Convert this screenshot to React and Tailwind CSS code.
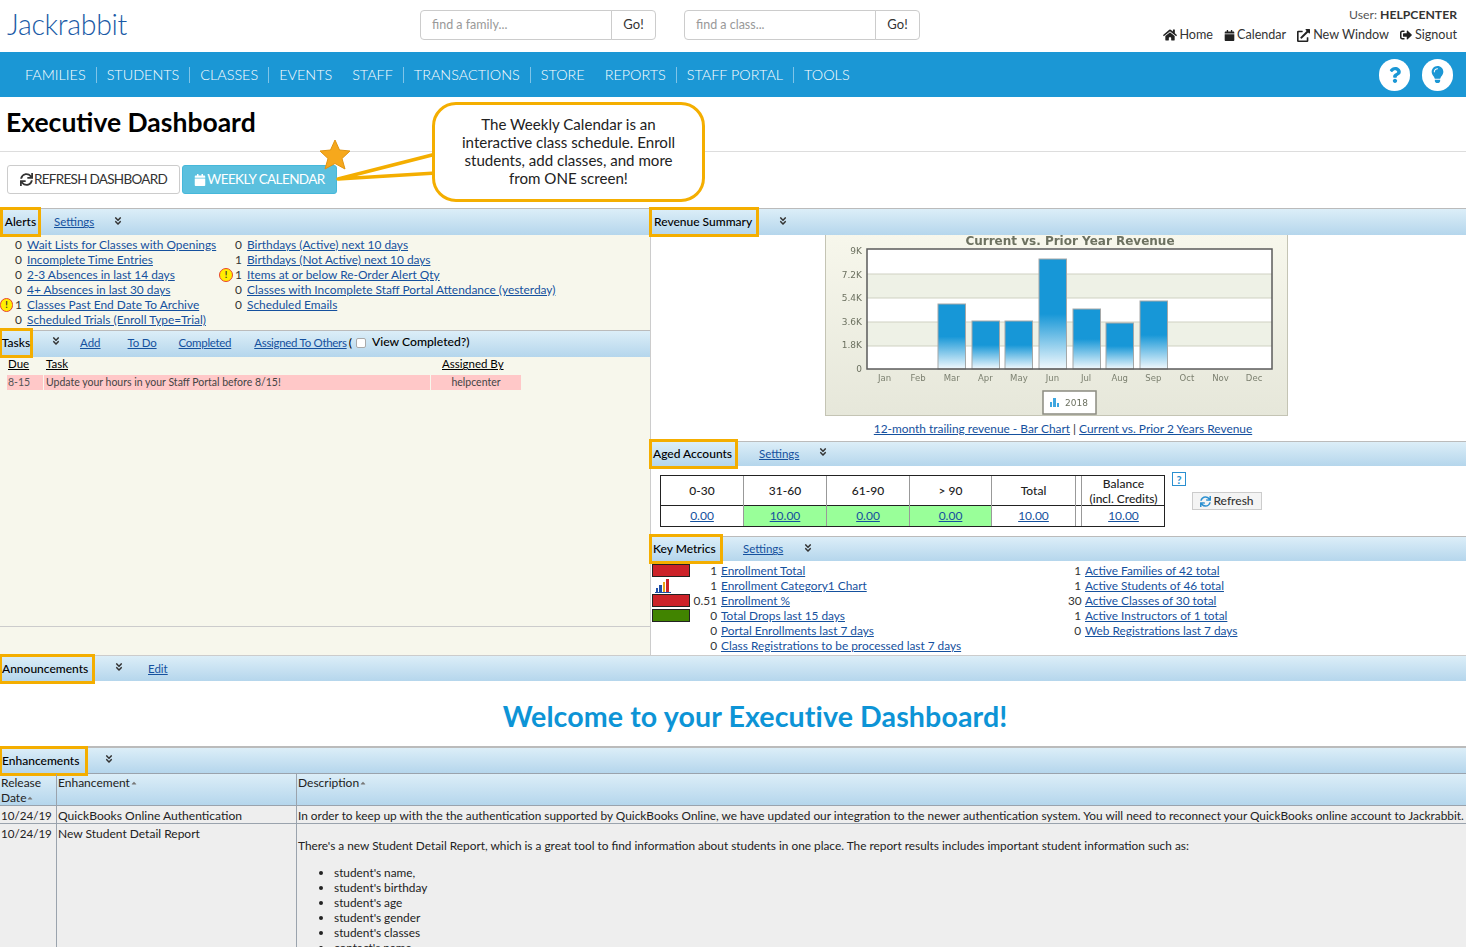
import { FaHome, FaCalendar, FaExternalLinkAlt, FaSignOutAlt, FaSync, FaQuestion, FaLightbulb, FaAngleDoubleDown, FaCaretUp } from 'react-icons/fa';

const NAV = [
  ['FAMILIES', true],
  ['STUDENTS', true],
  ['CLASSES', true],
  ['EVENTS', false],
  ['STAFF', true],
  ['TRANSACTIONS', true],
  ['STORE', false],
  ['REPORTS', true],
  ['STAFF PORTAL', true],
  ['TOOLS', false],
];

const ALERTS_LEFT = [
  ['0', 'Wait Lists for Classes with Openings'],
  ['0', 'Incomplete Time Entries'],
  ['0', '2-3 Absences in last 14 days'],
  ['0', '4+ Absences in last 30 days'],
  ['1', 'Classes Past End Date To Archive', true],
  ['0', 'Scheduled Trials (Enroll Type=Trial)'],
];

const ALERTS_RIGHT = [
  ['0', 'Birthdays (Active) next 10 days'],
  ['1', 'Birthdays (Not Active) next 10 days'],
  ['1', 'Items at or below Re-Order Alert Qty', true],
  ['0', 'Classes with Incomplete Staff Portal Attendance (yesterday)'],
  ['0', 'Scheduled Emails'],
];

const METRICS_LEFT = [
  ['red', '1', 'Enrollment Total'],
  ['chart', '1', 'Enrollment Category1 Chart'],
  ['red', '0.51', 'Enrollment %'],
  ['green', '0', 'Total Drops last 15 days'],
  [null, '0', 'Portal Enrollments last 7 days'],
  [null, '0', 'Class Registrations to be processed last 7 days'],
];

const METRICS_RIGHT = [
  ['1', 'Active Families of 42 total'],
  ['1', 'Active Students of 46 total'],
  ['30', 'Active Classes of 30 total'],
  ['1', 'Active Instructors of 1 total'],
  ['0', 'Web Registrations last 7 days'],
];

const AGED = [
  ['0-30', '0.00', false, 'w-[83px]'],
  ['31-60', '10.00', true, 'w-[83px]'],
  ['61-90', '0.00', true, 'w-[83px]'],
  ['> 90', '0.00', true, 'w-[82px]'],
  ['Total', '10.00', false, 'w-[84px]'],
];

const BARS = [
  [938, 304], [972, 321], [1005, 321], [1039, 259], [1073, 309], [1106, 323], [1140, 301],
];

const MONTHS = ['Jan', 'Feb', 'Mar', 'Apr', 'May', 'Jun', 'Jul', 'Aug', 'Sep', 'Oct', 'Nov', 'Dec'];
const STUDENT_ITEMS = ["student's name,", "student's birthday", "student's age", "student's gender", "student's classes", "contact's name"];

function Tag({ children, className = '' }) {
  return (
    <div className={`flex h-[30px] -my-0.5 shrink-0 items-center whitespace-nowrap border-[3px] border-[#f4ae00] text-[12px] font-medium text-black ${className}`}>
      {children}
    </div>
  );
}

function PanelLink({ children, className = '' }) {
  return <a className={`text-[11.5px] text-[#15519e] underline ${className}`}>{children}</a>;
}

function Chevrons({ className = '' }) {
  return <FaAngleDoubleDown className={`text-[10px] text-[#333] ${className}`} />;
}

function PanelHead({ children, className = '' }) {
  return (
    <div className={`flex items-center border-t border-t-[#bbb] bg-gradient-to-b from-[#dceef8] to-[#b5d6ec] ${className}`}>
      {children}
    </div>
  );
}

function Warn() {
  return (
    <span className="flex h-[14px] w-[14px] items-center justify-center rounded-full border-[1.5px] border-[#e8432e] bg-[#ffee00] text-[9px] font-bold leading-none text-[#333]">!</span>
  );
}

function AlertRow({ count, label, warn, numWidth }) {
  return (
    <div className="flex h-[15px] items-center text-[11.9px]">
      <span className={`flex shrink-0 items-center justify-end gap-[2px] text-[#333] ${numWidth}`}>
        {warn && <Warn />}
        {count}
      </span>
      <a className="ml-[5px] whitespace-nowrap text-[#15519e] underline">{label}</a>
    </div>
  );
}

function MetricSwatch({ kind }) {
  if (kind === 'red') return <div className="h-[13px] w-[38px] border border-[#222] bg-[#cc2229]" />;
  if (kind === 'green') return <div className="h-[13px] w-[38px] border border-[#222] bg-[#418400]" />;
  if (kind === 'chart') {
    return (
      <svg width="38" height="14" viewBox="0 0 38 14">
        <rect x="4" y="9" width="2" height="4" fill="#1f4fa8" />
        <rect x="7" y="6" width="3" height="7" fill="#1f4fa8" />
        <rect x="11" y="3" width="2" height="10" fill="#e8a317" />
        <rect x="14" y="0" width="3" height="13" fill="#cc2229" />
        <rect x="3" y="13" width="16" height="1" fill="#1f4fa8" />
      </svg>
    );
  }
  return <div className="h-[13px] w-[38px]" />;
}

function RevenueChart() {
  const ox = 825;
  const oy = 235;
  return (
    <svg width="463" height="181" viewBox="825 235 463 181" className="block" style={{ filter: 'blur(0.4px)' }}>
      <defs>
        <linearGradient id="panelBg" x1="0" y1="0" x2="0" y2="1">
          <stop offset="0" stopColor="#f7f7ec" />
          <stop offset="1" stopColor="#e6e7da" />
        </linearGradient>
        <linearGradient id="bar" x1="0" y1="0" x2="0" y2="1">
          <stop offset="0" stopColor="#1797d7" />
          <stop offset="0.5" stopColor="#1797d7" />
          <stop offset="1" stopColor="#f2f9fd" />
        </linearGradient>
      </defs>
      <rect x={ox + 0.5} y={oy - 2} width="462" height="182.5" fill="url(#panelBg)" stroke="#c4c4b4" />
      <text x="1070" y="245" textAnchor="middle" fontFamily="DejaVu Sans, sans-serif" fontSize="12" fontWeight="700" fill="#6c7160">
        Current vs. Prior Year Revenue
      </text>
      <rect x="867" y="249" width="405" height="120" fill="#fff" />
      <rect x="867" y="274" width="405" height="24" fill="#eef1e6" />
      <rect x="867" y="322" width="405" height="24" fill="#eef1e6" />
      {[274, 298, 322, 346].map((y) => (
        <line key={y} x1="867" x2="1272" y1={y} y2={y} stroke="#cfd1c2" />
      ))}
      {BARS.map(([x, top]) => (
        <rect key={x} x={x} y={top} width="27.5" height={369 - top} fill="url(#bar)" stroke="#a5a8a8" />
      ))}
      <rect x="867" y="249" width="405" height="120" fill="none" stroke="#5b5b5b" strokeWidth="1.5" />
      {[['9K', 254], ['7.2K', 278], ['5.4K', 301], ['3.6K', 325], ['1.8K', 348], ['0', 372]].map(([t, y]) => (
        <text key={t} x="862" y={y} textAnchor="end" fontFamily="DejaVu Sans, sans-serif" fontSize="9" fill="#6c7160">{t}</text>
      ))}
      {MONTHS.map((m, i) => (
        <text key={m} x={884.5 + i * 33.6} y="381" textAnchor="middle" fontFamily="DejaVu Sans, sans-serif" fontSize="8.5" fill="#7c8070">{m}</text>
      ))}
      <rect x="1043" y="391" width="53" height="23" fill="#fff" stroke="#8b8b80" strokeWidth="1.5" />
      <rect x="1050" y="402" width="2" height="5" fill="#3ea6e0" />
      <rect x="1053" y="398" width="3" height="9" fill="#3ea6e0" />
      <rect x="1057" y="403" width="2" height="4" fill="#3ea6e0" />
      <text x="1065" y="406" fontFamily="DejaVu Sans, sans-serif" fontSize="9" fill="#6c7160">2018</text>
    </svg>
  );
}

function SearchBox({ placeholder }) {
  return (
    <div className="flex h-[30px] items-stretch">
      <div className="flex w-[192px] items-center rounded-l border border-[#ccc] px-[11px] text-[12.5px] text-[#999]">{placeholder}</div>
      <div className="-ml-px flex w-[45px] items-center justify-center rounded-r border border-[#ccc] text-[13px] text-[#333]">Go!</div>
    </div>
  );
}

export default function App() {
  return (
    <div className="relative h-[947px] w-[1466px] overflow-hidden bg-white font-['Lato',sans-serif] text-[12px] text-[#222]">
      {/* Top bar */}
      <header className="flex h-[52px] items-start">
        <div className="ml-[7px] mt-[4px] w-[413px] text-[28.5px] font-light leading-[40px] tracking-[-0.3px] text-[#1a5aa6]">Jackrabbit</div>
        <div className="mt-[10px]"><SearchBox placeholder="find a family..." /></div>
        <div className="ml-[28px] mt-[10px]"><SearchBox placeholder="find a class..." /></div>
        <div className="ml-auto mr-[9px] mt-[7px] flex flex-col items-end">
          <div className="text-[12.2px] leading-[16px] text-[#555]">User: <b className="text-[#333]">HELPCENTER</b></div>
          <div className="mt-[4px] flex items-center gap-[11px] text-[12.6px] leading-[16px] text-[#333]">
            <span className="flex items-center gap-[2px]"><FaHome className="text-[14px] text-[#222]" />Home</span>
            <span className="flex items-center gap-[2px]"><FaCalendar className="text-[11px] text-[#222]" />Calendar</span>
            <span className="flex items-center gap-[3px]"><FaExternalLinkAlt className="text-[13px] text-[#222]" />New Window</span>
            <span className="flex items-center gap-[3px]"><FaSignOutAlt className="text-[12px] text-[#222]" />Signout</span>
          </div>
        </div>
      </header>

      {/* Main nav */}
      <nav className="flex h-[45px] items-center bg-[#1b97d5] pl-[15px] pr-[13px] text-white">
        {NAV.map(([label, sep]) => (
          <div key={label} className={`flex h-[16px] items-center px-[10px] pt-[1px] text-[14.4px] font-light leading-none ${sep ? 'border-r border-r-[#7fc4e8]' : ''}`}>
            {label}
          </div>
        ))}
        <div className="ml-auto flex items-center gap-[12px]">
          <span className="flex h-[32px] w-[31px] items-center justify-center rounded-full bg-white text-[#1b97d5]"><FaQuestion className="text-[16px]" /></span>
          <span className="flex h-[32px] w-[31px] items-center justify-center rounded-full bg-white text-[#1b97d5]"><FaLightbulb className="text-[17px]" /></span>
        </div>
      </nav>

      {/* Title */}
      <div className="flex h-[55px] items-center border-b border-b-[#ddd] pl-[6px]">
        <h1 className="pb-[4px] text-[26.5px] font-bold leading-none text-black">Executive Dashboard</h1>
      </div>

      {/* Toolbar */}
      <div className="flex h-[56px] items-start gap-[2px] pl-[7px] pt-[13px]">
        <button className="flex h-[29px] w-[173px] items-center justify-center gap-[1px] rounded-[3px] border border-[#ccc] bg-white text-[13.5px] tracking-[-0.7px] text-[#333]">
          <FaSync className="text-[13px]" />REFRESH DASHBOARD
        </button>
        <button className="flex h-[29px] w-[155px] items-center justify-center gap-[1px] rounded-[3px] border border-[#46b8da] bg-[#5bc0de] text-[13.5px] tracking-[-0.6px] text-white">
          <FaCalendar className="text-[12px]" />WEEKLY CALENDAR
        </button>
      </div>

      {/* Two columns */}
      <div className="flex h-[447px]">
        <div className="flex w-[650px] flex-col bg-[#f7f7ec]">
          <PanelHead className="h-[27px]">
            <Tag className="w-[41px] justify-center">Alerts</Tag>
            <PanelLink className="ml-[13px]">Settings</PanelLink>
            <Chevrons className="ml-[19px] -mt-[3px]" />
          </PanelHead>
          <div className="flex h-[95px] pt-[2px]">
            <div className="w-[217px]">
              {ALERTS_LEFT.map(([n, l, w]) => <AlertRow key={l} count={n} label={l} warn={w} numWidth="w-[22px]" />)}
            </div>
            <div>
              {ALERTS_RIGHT.map(([n, l, w]) => <AlertRow key={l} count={n} label={l} warn={w} numWidth="w-[25px]" />)}
            </div>
          </div>
          <PanelHead className="h-[27px] pb-[3px]">
            <Tag className="-ml-px w-[34px] justify-center">Tasks</Tag>
            <Chevrons className="ml-[18px] -mt-[3px]" />
            <PanelLink className="ml-[19px]">Add</PanelLink>
            <PanelLink className="ml-[27px] tracking-[-0.2px]">To Do</PanelLink>
            <PanelLink className="ml-[22px] tracking-[-0.3px]">Completed</PanelLink>
            <PanelLink className="ml-[23px] tracking-[-0.3px]">Assigned To Others</PanelLink>
            <span className="ml-[2px] font-medium text-black">(</span>
            <span className="ml-[4px] h-[10px] w-[10px] rounded-[2px] border border-[#aaa] bg-white" />
            <span className="ml-[6px] text-[12.2px] font-medium text-black">View Completed?)</span>
          </PanelHead>
          <div className="flex h-[18px] items-center pb-[4px] pl-[8px] text-[11.5px] text-black underline">
            <span className="w-[38px]">Due</span>
            <span className="w-[396px]">Task</span>
            <span>Assigned By</span>
          </div>
          <div className="ml-[7px] flex h-[15px] w-[514px] gap-[1px] pt-0 text-[10.5px] text-[#444]">
            <div className="flex w-[36px] items-center bg-[#ffc8c8] pl-[1px] pt-[1px] text-[#555]">8-15</div>
            <div className="flex w-[386px] items-center bg-[#ffc8c8] pl-[2px] pt-[1px]">Update your hours in your Staff Portal before 8/15!</div>
            <div className="flex flex-1 items-center justify-center bg-[#ffc8c8] pt-[1px]">helpcenter</div>
          </div>
          <div className="flex-1" />
          <div className="mb-[28px] border-t border-t-[#ccc]" />
        </div>

        <div className="flex flex-1 flex-col border-l border-l-[#ccc]">
          <PanelHead className="h-[27px]">
            <Tag className="-ml-[2px] w-[110px] pl-[2px]">Revenue Summary</Tag>
            <Chevrons className="ml-[19px] -mt-[3px]" />
          </PanelHead>
          <div className="flex h-[206px] flex-col items-center">
            <div className="-ml-[5px]"><RevenueChart /></div>
            <div className="ml-[9px] mt-[4px] text-[11.9px] text-[#333]">
              <a className="text-[#15519e] underline">12-month trailing revenue - Bar Chart</a> | <a className="text-[#15519e] underline">Current vs. Prior 2 Years Revenue</a>
            </div>
          </div>
          <PanelHead className="h-[25px] pb-[1px]">
            <Tag className="-ml-[2px] w-[89px] pl-[1px]">Aged Accounts</Tag>
            <PanelLink className="ml-[21px]">Settings</PanelLink>
            <Chevrons className="ml-[19px] -mt-[3px]" />
          </PanelHead>
          <div className="flex h-[70px] pl-[9px] pt-[9px]">
            <div className="flex h-[52px] border border-[#222]">
              {AGED.map(([h, v, green, w]) => (
                <div key={h} className={`flex flex-col border-r border-r-[#999] ${w}`}>
                  <div className="flex h-[30px] items-center justify-center border-b border-b-[#222] font-medium text-[#222]">{h}</div>
                  <div className={`flex flex-1 items-center justify-center ${green ? 'bg-[#99ff99]' : ''}`}>
                    <a className="text-[#15519e] underline">{v}</a>
                  </div>
                </div>
              ))}
              <div className="flex w-[6px] flex-col border-r border-r-[#999]">
                <div className="h-[30px] border-b border-b-[#222]" />
              </div>
              <div className="flex w-[82px] flex-col">
                <div className="flex h-[30px] flex-col items-center justify-center border-b border-b-[#222] pl-[1px] font-medium leading-[15px]">
                  <span>Balance</span>
                  <span>(incl. Credits)</span>
                </div>
                <div className="flex flex-1 items-center justify-center pl-[1px]">
                  <a className="text-[#15519e] underline">10.00</a>
                </div>
              </div>
            </div>
            <div className="ml-[7px] -mt-[3px] flex h-[14px] w-[14px] items-center justify-center border border-[#2a8fd0] text-[11px] font-bold leading-none text-[#2a8fd0]">?</div>
            <button className="ml-[6px] mt-[17px] flex h-[18px] w-[70px] items-center justify-center gap-[2px] border border-[#ccc] bg-[#f4f4f4] text-[12px] font-medium text-[#333]">
              <FaSync className="text-[11px] text-[#2a8fd0]" />Refresh
            </button>
          </div>
          <PanelHead className="h-[25px]">
            <Tag className="-ml-[2px] w-[74px] pl-[1px]">Key Metrics</Tag>
            <PanelLink className="ml-[20px]">Settings</PanelLink>
            <Chevrons className="ml-[20px] -mt-[3px]" />
          </PanelHead>
          <div className="flex flex-1 pl-[1px] pt-[2px] text-[11.85px]">
            <div className="w-[366px]">
              {METRICS_LEFT.map(([kind, n, l]) => (
                <div key={l} className="flex h-[15px] items-center">
                  <MetricSwatch kind={kind} />
                  <span className="w-[27px] text-right text-[#333]">{n}</span>
                  <a className="ml-[4px] whitespace-nowrap text-[#15519e] underline">{l}</a>
                </div>
              ))}
            </div>
            <div className="pl-[50px]">
              {METRICS_RIGHT.map(([n, l]) => (
                <div key={l} className="flex h-[15px] items-center">
                  <span className="w-[13px] text-right text-[#333]">{n}</span>
                  <a className="ml-[4px] whitespace-nowrap text-[#15519e] underline">{l}</a>
                </div>
              ))}
            </div>
          </div>
        </div>
      </div>

      {/* Announcements */}
      <PanelHead className="h-[26px] border-t-[#ccc]">
        <Tag className="-ml-px w-[96px]">Announcements</Tag>
        <Chevrons className="ml-[19px] -mt-[3px]" />
        <PanelLink className="ml-[24px]">Edit</PanelLink>
      </PanelHead>
      <div className="flex h-[65px] items-center justify-center pl-[44px] text-[28.6px] font-bold leading-none tracking-[0.1px] text-[#0d94d6]">
        <span className="pt-[6px]">Welcome to your Executive Dashboard!</span>
      </div>

      {/* Enhancements */}
      <PanelHead className="h-[27px] border-t-2 border-t-[#bbb]">
        <Tag className="-ml-px w-[89px]">Enhancements</Tag>
        <Chevrons className="ml-[16px] -mt-[3px]" />
      </PanelHead>
      <div className="flex h-[33px] border-y border-y-[#9aa3ad] bg-gradient-to-b from-[#dceef8] to-[#b5d6ec] leading-[15px] text-[#222]">
        <div className="w-[57px] shrink-0 border-r border-r-[#9aa3ad] pl-[1px] pt-[1px]">Release<br /><span className="inline-flex items-center">Date<FaCaretUp className="text-[8px] text-[#777]" /></span></div>
        <div className="flex w-[240px] shrink-0 items-start border-r border-r-[#9aa3ad] pl-[1px] pt-[1px]"><span className="inline-flex items-center">Enhancement<FaCaretUp className="text-[8px] text-[#777]" /></span></div>
        <div className="flex-1 pl-[1px] pt-[1px]"><span className="inline-flex items-center">Description<FaCaretUp className="text-[8px] text-[#777]" /></span></div>
      </div>
      <div className="flex h-[18px] items-center border-b border-b-[#9aa3ad] bg-[#eee] leading-[15px]">
        <div className="flex h-full w-[57px] shrink-0 items-center border-r border-r-[#9aa3ad] pl-[1px] pt-[1px] text-[11.6px]">10/24/19</div>
        <div className="flex h-full w-[240px] shrink-0 items-center border-r border-r-[#9aa3ad] pl-[1px] pt-[1px] text-[12.1px]">QuickBooks Online Authentication</div>
        <div className="min-w-0 flex-1 whitespace-nowrap pl-[1px] pt-[1px] text-[11.85px]">In order to keep up with the the authentication supported by QuickBooks Online, we have updated our integration to the newer authentication system. You will need to reconnect your QuickBooks online account to Jackrabbit.</div>
      </div>
      <div className="flex h-[130px] bg-[#eee] leading-[15px]">
        <div className="w-[57px] shrink-0 border-r border-r-[#9aa3ad] pl-[1px] pt-[2px] text-[11.6px]">10/24/19</div>
        <div className="w-[240px] shrink-0 border-r border-r-[#9aa3ad] pl-[1px] pt-[2px]">New Student Detail Report</div>
        <div className="min-w-0 flex-1 pl-[1px] pt-[14px] text-[11.85px]">
          <p>There's a new Student Detail Report, which is a great tool to find information about students in one place. The report results includes important student information such as:</p>
          <ul className="ml-[36px] mt-[12px] list-disc">
            {STUDENT_ITEMS.map((s) => <li key={s}>{s}</li>)}
          </ul>
        </div>
      </div>

      {/* Tour callout, drawn over the page */}
      <svg width="390" height="110" viewBox="320 130 390 110" className="pointer-events-none absolute left-[320px] top-[130px]">
        <path d="M338 179 L436 154 L436 173 Z" fill="#fff" stroke="#f4ae00" strokeWidth="3.5" strokeLinejoin="round" />
        <path d="M335 140 L339.5 150 L350 151 L342 158.5 L345 169 L335 163.5 L325 169 L328 158.5 L320 151 L330.5 150 Z" fill="#f6a81c" stroke="#e09410" strokeWidth="1" />
      </svg>
      <div className="absolute left-[432px] top-[102px] flex h-[100px] w-[273px] items-center justify-center rounded-[24px] border-[3px] border-[#f4ae00] bg-white px-[20px] pb-[2px] text-center text-[15.1px] leading-[18px] text-[#222]">
        The Weekly Calendar is an interactive class schedule. Enroll students, add classes, and more from ONE screen!
      </div>
    </div>
  );
}
